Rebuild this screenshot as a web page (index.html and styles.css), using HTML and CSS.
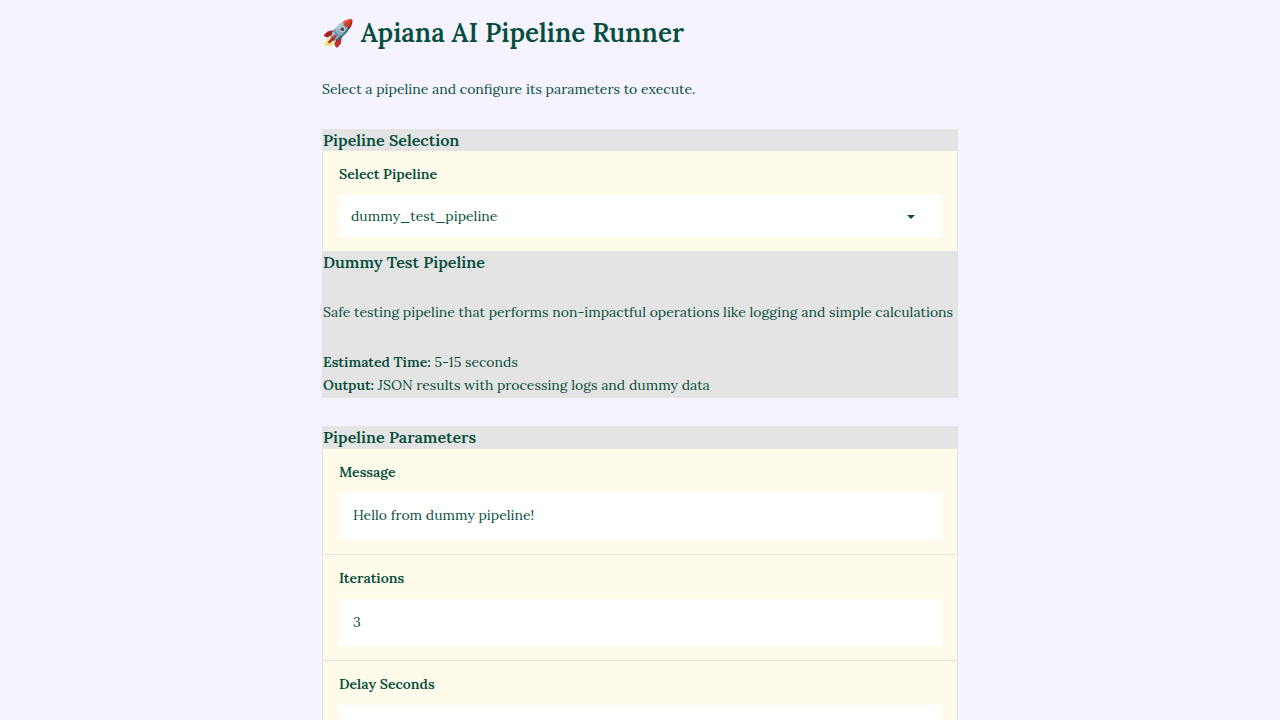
FILE: index.html
```html
<!DOCTYPE html>
<html lang="en">
<head>
<meta charset="utf-8">
<meta name="viewport" content="width=device-width, initial-scale=1">
<title>Apiana AI Pipeline Runner</title>
<link rel="stylesheet" href="styles.css">
</head>
<body>
<main class="app">
  <h1 class="title">🚀 Apiana AI Pipeline Runner</h1>
  <p class="intro">Select a pipeline and configure its parameters to execute.</p>

  <section class="group">
    <h3 class="heading">Pipeline Selection</h3>
    <div class="block">
      <label class="label" for="pipeline">Select Pipeline</label>
      <div class="select-wrap">
        <select class="select" id="pipeline">
          <option>dummy_test_pipeline</option>
        </select>
        <svg class="caret" viewBox="0 0 18 18" aria-hidden="true"><path d="M5 8l4 4 4-4z"/></svg>
      </div>
    </div>
    <div class="details">
      <h3 class="heading">Dummy Test Pipeline</h3>
      <p class="description">Safe testing pipeline that performs non-impactful operations like logging and simple calculations</p>
      <p class="facts"><strong>Estimated Time:</strong> 5-15 seconds<br><strong>Output:</strong> JSON results with processing logs and dummy data</p>
    </div>
  </section>

  <section class="group">
    <h3 class="heading heading-parameters">Pipeline Parameters</h3>
    <div class="fields">
      <div class="block">
        <label class="label label-text" for="message">Message</label>
        <input class="input input-text" id="message" type="text" value="Hello from dummy pipeline!">
      </div>
      <div class="block">
        <label class="label" for="iterations">Iterations</label>
        <input class="input" id="iterations" type="number" value="3">
      </div>
      <div class="block">
        <label class="label" for="delay">Delay Seconds</label>
        <input class="input" id="delay" type="number" value="1">
      </div>
    </div>
  </section>
</main>
</body>
</html>
```
FILE: styles.css
```css
* {
  box-sizing: border-box;
}

html {
  scrollbar-width: none;
}

body {
  margin: 0;
  height: 100vh;
  overflow: hidden auto;
  background: #f5f3ff;
  color: #064e3b;
  font: 14px/23px Lora, "Noto Serif", "Liberation Serif", serif;
}

h1, h3, p {
  margin: 0;
}

.app {
  display: flex;
  flex-direction: column;
  gap: 28px;
  width: 100%;
  max-width: 636px;
  margin: 0 auto;
  padding-top: 16px;
}

.title {
  font-size: 26px;
  line-height: 34px;
  font-weight: 600;
}

.intro {
  line-height: 23px;
}

.group {
  background: #e4e4e4;
  border: solid #e4e4e7;
  border-width: 0 1px;
}

.heading {
  font-size: 16px;
  line-height: 22px;
  font-weight: 600;
}

.heading-parameters {
  line-height: 23px;
}

.block {
  display: flex;
  flex-direction: column;
  padding: 13px 16px 14px;
  background: #fffbeb;
}

.label {
  margin-bottom: 10px;
  line-height: 21px;
  font-weight: 600;
}

.label-text {
  margin-bottom: 9px;
}

.select-wrap {
  display: grid;
  align-items: center;
  background: #fff;
}

.select,
.input {
  width: 100%;
  border: 0;
  border-radius: 0;
  background: #fff;
  color: inherit;
  font: inherit;
  appearance: none;
}

.select {
  grid-area: 1 / 1;
  height: 42px;
  padding: 0 12px;
}

.caret {
  grid-area: 1 / 1;
  justify-self: end;
  width: 18px;
  height: 18px;
  margin-right: 21px;
  fill: currentColor;
  pointer-events: none;
}

.input {
  height: 47px;
  padding: 0 14px 2px;
}

.input-text {
  height: 48px;
}

.input::-webkit-inner-spin-button {
  appearance: none;
}

.details {
  display: flex;
  flex-direction: column;
  gap: 27px;
  padding-bottom: 1px;
}

.description {
  padding-top: 1px;
}

.fields {
  display: flex;
  flex-direction: column;
  gap: 1px;
}

strong {
  font-weight: 600;
}
```
